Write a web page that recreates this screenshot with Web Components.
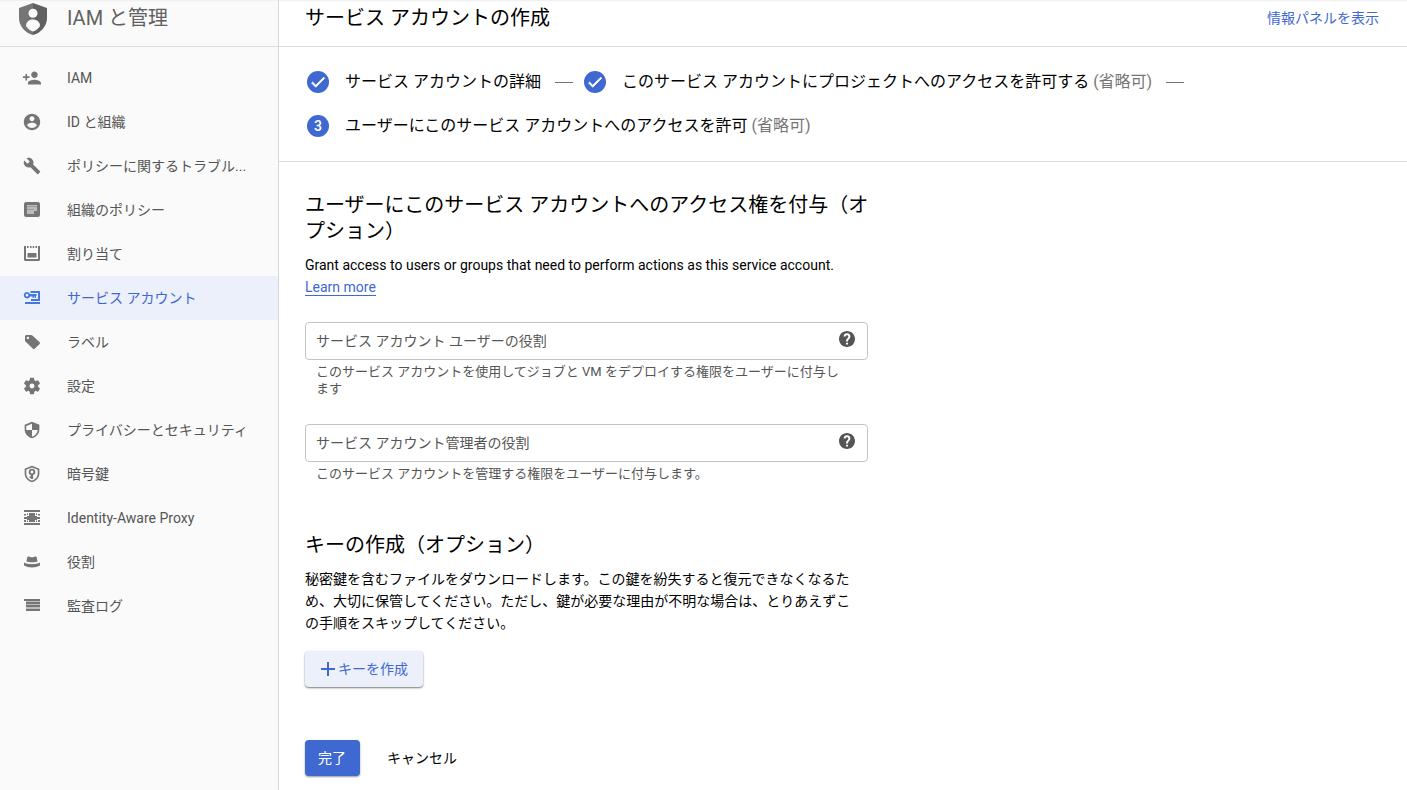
<!DOCTYPE html>
<html lang="ja">
<head>
<meta charset="utf-8">
<meta name="viewport" content="width=device-width, initial-scale=1">
<title>サービス アカウントの作成</title>
<style>
  html, body { margin: 0; background: #fff; }
  body { font-family: Roboto, "Noto Sans CJK JP", sans-serif; font-size: 14px; line-height: 22px; color: #000; }
</style>
</head>
<body>
<iam-console>
  <nav-panel slot="nav" heading="IAM と管理">
    <nav-item icon="person-add">IAM</nav-item>
    <nav-item icon="account">ID と組織</nav-item>
    <nav-item icon="wrench">ポリシーに関するトラブル...</nav-item>
    <nav-item icon="policy">組織のポリシー</nav-item>
    <nav-item icon="quota">割り当て</nav-item>
    <nav-item icon="service" active>サービス アカウント</nav-item>
    <nav-item icon="tag">ラベル</nav-item>
    <nav-item icon="gear">設定</nav-item>
    <nav-item icon="shield">プライバシーとセキュリティ</nav-item>
    <nav-item icon="shield-key">暗号鍵</nav-item>
    <nav-item icon="proxy">Identity-Aware Proxy</nav-item>
    <nav-item icon="hat">役割</nav-item>
    <nav-item icon="logs">監査ログ</nav-item>
  </nav-panel>
  <page-bar heading="サービス アカウントの作成"><span>情報パネルを表示</span></page-bar>
  <step-list>
    <step-item done>サービス アカウントの詳細</step-item>
    <step-item done optional>このサービス アカウントにプロジェクトへのアクセスを許可する</step-item>
    <step-item number="3" optional last>ユーザーにこのサービス アカウントへのアクセスを許可</step-item>
  </step-list>
  <access-form></access-form>
</iam-console>

<script>
const ICONS = {
  'brand': ['0 0 28 32', '<path fill="#757575" d="M14 0 0 5v10c0 8 6 15 14 17z"/><path fill="#616161" d="M14 0l14 5v10c0 8-6 15-14 17z"/><circle cx="14" cy="10.300" r="4.500" fill="#fafafa"/><path fill="#fafafa" d="M7 23c0-4 3-6.500 7-6.500s7 2.500 7 6.500c-2 3-4 4.500-7 5.500-3-1-5-2.500-7-5.500z"/>'],
  'person-add': ['1 1 22 22', '<path d="M15 12c2.210 0 4-1.790 4-4s-1.790-4-4-4-4 1.790-4 4 1.790 4 4 4zm-9-2V7H4v3H1v2h3v3h2v-3h3v-2H6zm9 4c-2.670 0-8 1.340-8 4v2h16v-2c0-2.660-5.330-4-8-4z"/>'],
  'account': ['1 1 22 22', '<path d="M12 2C6.480 2 2 6.480 2 12s4.480 10 10 10 10-4.480 10-10S17.520 2 12 2zm0 3c1.660 0 3 1.340 3 3s-1.340 3-3 3-3-1.340-3-3 1.340-3 3-3zm0 14.200c-2.500 0-4.710-1.280-6-3.220.03-1.990 4-3.080 6-3.080 1.990 0 5.970 1.090 6 3.080-1.290 1.940-3.500 3.220-6 3.220z"/>'],
  'wrench': ['0 0 24 24', '<path d="M22.700 19l-9.100-9.100c.9-2.300.4-5-1.500-6.900-2-2-5-2.400-7.400-1.300L9 6 6 9 1.600 4.700C.4 7.100.9 10.100 2.900 12.100c1.900 1.900 4.600 2.400 6.900 1.500l9.100 9.100c.4.4 1 .4 1.400 0l2.300-2.300c.5-.4.5-1.100.1-1.400z"/>'],
  'policy': ['0 0 18 18', '<rect x="1" y="1" width="16" height="15" rx="2"/><path fill="#bdbdbd" d="M4 4h10v6h-3v3H4z"/><path d="M4 5h10v1H4zM4 8h7v1H4z" fill="#999"/>'],
  'quota': ['0 0 18 18', '<path d="M1 1h2v13h12V1h2v13.500a1.500 1.500 0 0 1-1.500 1.500h-13A1.500 1.500 0 0 1 1 14.500z"/><path d="M4 1h1.500v2H4zM7 1h1.500v2H7zM9.700 1h1.500v2H9.700zM12.500 1H14v2h-1.500zM4.500 8h9v4.500h-9z"/>'],
  'service': ['0 0 18 18', '<path fill-rule="evenodd" d="M4 3a3.200 3.200 0 0 1 3 2h6.500v2H13v2h-1.200V7.500h-1V9H9.500V7.500H7a3.200 3.200 0 1 1-3-4.500zm0 1.800a1.400 1.400 0 1 0 0 2.800 1.400 1.400 0 0 0 0-2.800z"/><path d="M7.500 2H17v10H8v-2h7V4H7.500zM2 13h15v2H2z"/>'],
  'tag': ['0 0 18 18', '<path fill-rule="evenodd" d="M3.500 2H8c.6 0 1 .2 1.400.6l7 6.500c.8.700.8 1.500 0 2.200l-4.500 4.300c-.7.700-1.500.7-2.200 0l-7-6.800C2.200 8.400 2 8 2 7.500v-4C2 2.700 2.700 2 3.500 2zm1.400 1.700a1.200 1.200 0 1 0 0 2.400 1.200 1.200 0 0 0 0-2.400z"/>'],
  'gear': ['1 1 22 22', '<path d="M19.430 12.980c.04-.32.07-.64.07-.98s-.03-.66-.07-.98l2.110-1.650c.19-.15.24-.42.12-.64l-2-3.460c-.12-.22-.39-.3-.61-.22l-2.490 1c-.52-.4-1.080-.73-1.690-.98l-.38-2.650C14.460 2.180 14.250 2 14 2h-4c-.25 0-.46.18-.49.42l-.38 2.650c-.61.25-1.170.59-1.690.98l-2.490-1c-.23-.09-.49 0-.61.22l-2 3.460c-.13.22-.07.49.12.64l2.110 1.650c-.04.32-.07.65-.07.98s.03.66.07.98l-2.110 1.650c-.19.15-.24.42-.12.64l2 3.460c.12.22.39.3.61.22l2.490-1c.52.4 1.080.73 1.690.98l.38 2.650c.03.24.24.42.49.42h4c.25 0 .46-.18.49-.42l.38-2.650c.61-.25 1.170-.59 1.690-.98l2.490 1c.23.09.49 0 .61-.22l2-3.460c.12-.22.07-.49-.12-.64l-2.110-1.650zM12 15a3 3 0 1 1 0-6 3 3 0 0 1 0 6z"/>'],
  'shield': ['1 1 22 22', '<path d="M12 2 3 5.500V11c0 5.500 3.800 9.700 9 11 5.200-1.300 9-5.500 9-11V5.500L12 2zm0 9.990h7c-.53 4.120-3.280 7.100-7 8.240V12H5V7l7-2.700v7.690z"/>'],
  'shield-key': ['1 1 22 22', '<path fill-rule="evenodd" d="M12 2 3 5.500V11c0 5.500 3.800 9.700 9 11 5.200-1.300 9-5.500 9-11V5.500zm0 2.200 7 2.700V11c0 4.400-2.900 7.800-7 9-4.100-1.200-7-4.600-7-9V6.900z"/><path fill-rule="evenodd" d="M12 5.500a4 4 0 0 1 1.300 7.800V18h-2.600v-1.200H9.200v-2h1.500v-1.500A4 4 0 0 1 12 5.500zm0 2.200a1.800 1.800 0 1 0 0 3.600 1.800 1.800 0 0 0 0-3.600z"/>'],
  'proxy': ['0 0 18 18', '<path d="M1 1h16v2H1zM1 14h16v2H1zM6 4h6v3h2v1h3v2h-3v1h-2v2H6v-2H4v-1H1V8h3V7h2zM1 5h2v1.500H1zM15 5h2v1.500h-2zM1 11h2v2H1zM15 11h2v2h-2zM4 4.500h1V6H4zM13 4.500h1V6h-1zM4 11.500h1V13H4zM13 11.500h1V13h-1z"/>'],
  'hat': ['0 0 18 18', '<path d="M5.500 3.500c1 0 2 .8 3.500.8s2.500-.8 3.500-.8 1.500 1 2 5c-1.500 1-9.500 1-11 0 .5-4 1-5 2-5zM1 9.500c3.500 2 12.500 2 16 0v3c-4 2.500-12 2.500-16 0z"/>'],
  'logs': ['0 0 18 18', '<path fill="#bdbdbd" d="M3 3h14v11H3z"/><path d="M1 2h16v2H1zM3 5h14v2H3zM3 8h14v2H3zM3 12h14v2H3z"/>'],
  'check': ['0 0 24 24', '<path d="M9 16.170 4.830 12l-1.420 1.410L9 19 21 7l-1.410-1.410z" stroke="currentColor"/>'],
  'help': ['2 2 20 20', '<path d="M12 2C6.480 2 2 6.480 2 12s4.480 10 10 10 10-4.480 10-10S17.520 2 12 2zm1.300 17h-2.600v-2.400h2.600V19zm2-7.600-.9.900c-.8.8-1.100 1.400-1.100 2.700h-2.600v-.6c0-1.100.4-2.100 1.200-2.800l1.200-1.200c.4-.4.6-.9.6-1.400a1.700 1.700 0 0 0-3.400 0H7.800a4.200 4.200 0 0 1 8.400 0c0 .9-.4 1.800-.9 2.400z"/>'],
  'plus': ['0 0 14 14', '<path d="M6 0h2v6h6v2H8v6H6V8H0V6h6z"/>']
};

class UiIcon extends HTMLElement {
  connectedCallback() {
    const [box, body] = ICONS[this.getAttribute('name')];
    this.attachShadow({ mode: 'open' }).innerHTML = `
      <style>:host { display: block; flex: none; width: 18px; height: 18px; } svg { display: block; width: 100%; height: 100%; fill: currentColor; }</style>
      <svg viewBox="${box}" aria-hidden="true">${body}</svg>`;
  }
}

class IamConsole extends HTMLElement {
  connectedCallback() {
    this.attachShadow({ mode: 'open' }).innerHTML = `
      <style>
        :host { display: grid; grid-template-columns: 279px minmax(0, 1fr); min-height: 100vh; }
      </style>
      <slot name="nav"></slot>
      <main><slot></slot></main>`;
  }
}

class NavPanel extends HTMLElement {
  connectedCallback() {
    this.attachShadow({ mode: 'open' }).innerHTML = `
      <style>
        :host { display: block; box-sizing: border-box; background: #fafafa; border-right: 1px solid #d8d8d8; color: #616161; }
        header { display: flex; align-items: flex-start; gap: 20px; box-sizing: border-box; height: 47px; padding: 3px 0 0 19px; border-bottom: 1px solid #dcdcdc; box-shadow: inset 0 3px 2px -2px #eee; }
        h2 { margin: 0; font-size: 20px; line-height: 30px; font-weight: 400; }
        ui-icon { width: 28px; height: 32px; }
        nav { padding-top: 9px; }
      </style>
      <header><ui-icon name="brand"></ui-icon><h2>${this.getAttribute('heading')}</h2></header>
      <nav><slot></slot></nav>`;
  }
}

class NavItem extends HTMLElement {
  connectedCallback() {
    this.attachShadow({ mode: 'open' }).innerHTML = `
      <style>
        :host { display: block; color: #555; }
        a { display: flex; align-items: center; gap: 26px; height: 44px; padding-left: 23px; color: inherit; text-decoration: none; white-space: nowrap; }
        ui-icon { color: #757575; }
        :host([active]) { color: #3f68d0; background: #ebf0fa; }
        :host([active]) ui-icon { color: #4577e0; }
      </style>
      <a href="#"><ui-icon name="${this.getAttribute('icon')}"></ui-icon><span><slot></slot></span></a>`;
  }
}

class PageBar extends HTMLElement {
  connectedCallback() {
    this.attachShadow({ mode: 'open' }).innerHTML = `
      <style>
        :host { display: flex; justify-content: space-between; align-items: flex-start; box-sizing: border-box; height: 47px; padding: 3px 28px 0 26px; border-bottom: 1px solid #dcdcdc; box-shadow: inset 0 3px 2px -2px #eee; }
        h1 { margin: 0; font-size: 20px; line-height: 30px; font-weight: 400; }
        a { line-height: 30px; color: #3f68d0; text-decoration: none; }
      </style>
      <h1>${this.getAttribute('heading')}</h1><a href="#"><slot></slot></a>`;
  }
}

class StepList extends HTMLElement {
  connectedCallback() {
    this.attachShadow({ mode: 'open' }).innerHTML = `
      <style>:host { display: flex; flex-wrap: wrap; padding: 13px 28px; border-bottom: 1px solid #dcdcdc; }</style>
      <slot></slot>`;
  }
}

class StepItem extends HTMLElement {
  connectedCallback() {
    const mark = this.hasAttribute('done') ? '<ui-icon name="check"></ui-icon>' : this.getAttribute('number');
    this.attachShadow({ mode: 'open' }).innerHTML = `
      <style>
        :host { display: flex; align-items: center; height: 44px; font-size: 16px; }
        .mark { display: flex; align-items: center; justify-content: center; flex: none; width: 22px; height: 22px; margin-right: 16px; border-radius: 50%; background: #3f68d0; color: #fff; font-size: 14px; font-weight: 500; }
        ui-icon { width: 18px; height: 18px; }
        .optional { color: #757575; }
        .dash { width: 18px; height: 1px; margin: 0 11px 0 14px; background: #757575; }
      </style>
      <span class="mark">${mark}</span>
      <span><slot></slot>${this.hasAttribute('optional') ? ' <span class="optional">(省略可)</span>' : ''}</span>
      ${this.hasAttribute('last') ? '' : '<span class="dash"></span>'}`;
  }
}

class RoleField extends HTMLElement {
  connectedCallback() {
    const label = this.getAttribute('label');
    this.attachShadow({ mode: 'open' }).innerHTML = `
      <style>
        :host { display: block; }
        .box { display: flex; align-items: center; box-sizing: border-box; height: 38px; padding: 0 12px 0 10px; border: 1px solid #c4c4c4; border-radius: 4px; }
        input { flex: 1; min-width: 0; height: 32px; padding: 0; border: 0; outline: 0; background: none; font: inherit; }
        input::placeholder { color: #555; opacity: 1; }
        button { padding: 0 0 4px; border: 0; background: none; color: #555; }
        ui-icon { width: 16px; height: 16px; }
        p { margin: 3px 22px 0 11px; font-size: 13px; line-height: 17px; color: #555; }
      </style>
      <div class="box"><input type="text" aria-label="${label}" aria-describedby="hint" placeholder="${label}"><button type="button" aria-label="ヘルプ"><ui-icon name="help"></ui-icon></button></div>
      <p id="hint"><slot></slot></p>`;
  }
}

class UiButton extends HTMLElement {
  connectedCallback() {
    this.attachShadow({ mode: 'open' }).innerHTML = `
      <style>
        :host { display: inline-block; }
        button { display: flex; align-items: center; gap: 3px; height: 36px; padding: 0 13px; border: 0; border-radius: 4px; background: none; color: #000; font: inherit; cursor: pointer; }
        :host([kind="primary"]) button { padding: 0 14px 0 13px; background: #3f68d0; color: #fff; box-shadow: 0 1px 2px #0006; }
        :host([kind="raised"]) button { padding: 0 15px 0 16px; background: #ebf0fa; color: #3f68d0; box-shadow: 0 1px 2px #0008; }
        ::slotted(ui-icon) { width: 14px; height: 14px; }
      </style>
      <button type="button"><slot></slot></button>`;
  }
}

class AccessForm extends HTMLElement {
  connectedCallback() {
    this.attachShadow({ mode: 'open' }).innerHTML = `
      <style>
        :host { display: block; max-width: 563px; padding: 30px 26px 12px; }
        h2 { margin: 0 -8px 10px 0; font-size: 20px; line-height: 26px; font-weight: 400; }
        p { margin: 0 7px 0 0; }
        a { color: #3f68d0; text-decoration: none; border-bottom: 1px solid; }
        .fields { display: grid; gap: 27px; margin: 24px 0 50px; }
        .create { display: block; margin: 17px 0 53px; }
        .actions { display: flex; gap: 14px; }
      </style>
      <h2>ユーザーにこのサービス アカウントへのアクセス権を付与（オプション）</h2>
      <p>Grant access to users or groups that need to perform actions as this service account. <a href="#">Learn more</a></p>
      <div class="fields">
        <role-field label="サービス アカウント ユーザーの役割">このサービス アカウントを使用してジョブと VM をデプロイする権限をユーザーに付与します</role-field>
        <role-field label="サービス アカウント管理者の役割">このサービス アカウントを管理する権限をユーザーに付与します。</role-field>
      </div>
      <h2>キーの作成（オプション）</h2>
      <p>秘密鍵を含むファイルをダウンロードします。この鍵を紛失すると復元できなくなるため、大切に保管してください。ただし、鍵が必要な理由が不明な場合は、とりあえずこの手順をスキップしてください。</p>
      <ui-button class="create" kind="raised"><ui-icon name="plus"></ui-icon>キーを作成</ui-button>
      <div class="actions"><ui-button kind="primary">完了</ui-button><ui-button>キャンセル</ui-button></div>`;
  }
}

customElements.define('ui-icon', UiIcon);
customElements.define('ui-button', UiButton);
customElements.define('iam-console', IamConsole);
customElements.define('nav-panel', NavPanel);
customElements.define('nav-item', NavItem);
customElements.define('page-bar', PageBar);
customElements.define('step-list', StepList);
customElements.define('step-item', StepItem);
customElements.define('role-field', RoleField);
customElements.define('access-form', AccessForm);
</script>
</body>
</html>
